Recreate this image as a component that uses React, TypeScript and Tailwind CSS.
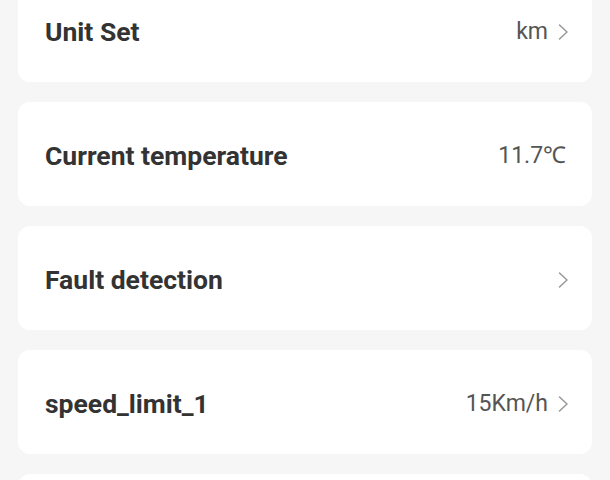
const rows = [
  { label: "Unit Set", value: "km", arrow: true },
  { label: "Current temperature", value: "11.7℃", arrow: false },
  { label: "Fault detection", value: "", arrow: true },
  { label: "speed_limit_1", value: "15Km/h", arrow: true },
  { label: "", value: "", arrow: false },
];

function Chevron() {
  return (
    <svg width="13" height="18" viewBox="0 0 13 18" className="ml-[9px]">
      <path d="M2.5 2 L10 9 L2.5 16" fill="none" stroke="#9a9a9a" strokeWidth="1.6" strokeLinecap="round" strokeLinejoin="round" />
    </svg>
  );
}

export default function App() {
  return (
    <div className="w-[610px] h-[480px] overflow-hidden bg-[#f6f6f6]" style={{ fontFamily: "Roboto, 'Noto Sans', sans-serif" }}>
      <div className="flex flex-col gap-[20px] px-[18px] -mt-[22px]">
        {rows.map((row, i) => (
          <div key={i} className={`h-[104px] bg-white rounded-[12px] flex items-center justify-between pl-[27px] pt-[4px] ${row.arrow ? "pr-[22px]" : "pr-[26px]"}`}>
            <span className="text-[26.5px] font-bold text-[#333333]">{row.label}</span>
            <div className="flex items-center">
              {row.value && <span className="text-[23px] text-[#555555]">{row.value}</span>}
              {row.arrow && <Chevron />}
            </div>
          </div>
        ))}
      </div>
    </div>
  );
}
